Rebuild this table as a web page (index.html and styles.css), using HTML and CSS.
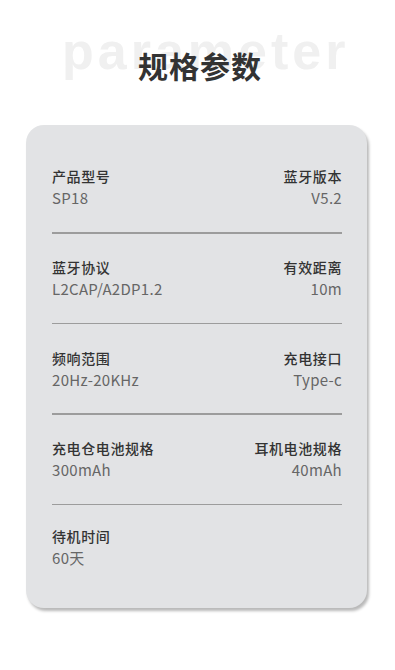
FILE: index.html
```html
<!DOCTYPE html>
<html lang="zh">
<head>
<meta charset="utf-8">
<title>规格参数</title>
<link rel="stylesheet" href="styles.css">
</head>
<body>
<header class="head">
  <div class="watermark">parameter</div>
  <h1 class="title">规格参数</h1>
</header>
<section class="card">
  <div class="row">
    <div class="cell"><div class="label">产品型号</div><div class="value">SP18</div></div>
    <div class="cell right"><div class="label">蓝牙版本</div><div class="value">V5.2</div></div>
  </div>
  <div class="sep"></div>
  <div class="row">
    <div class="cell"><div class="label">蓝牙协议</div><div class="value">L2CAP/A2DP1.2</div></div>
    <div class="cell right"><div class="label">有效距离</div><div class="value">10m</div></div>
  </div>
  <div class="sep"></div>
  <div class="row">
    <div class="cell"><div class="label">频响范围</div><div class="value">20Hz-20KHz</div></div>
    <div class="cell right"><div class="label">充电接口</div><div class="value">Type-c</div></div>
  </div>
  <div class="sep"></div>
  <div class="row">
    <div class="cell"><div class="label">充电仓电池规格</div><div class="value">300mAh</div></div>
    <div class="cell right"><div class="label">耳机电池规格</div><div class="value">40mAh</div></div>
  </div>
  <div class="sep"></div>
  <div class="row last">
    <div class="cell"><div class="label">待机时间</div><div class="value">60天</div></div>
  </div>
</section>
</body>
</html>
```
FILE: styles.css
```css
html, body {
  margin: 0;
  padding: 0;
  background: #ffffff;
}
body {
  width: 395px;
  height: 670px;
  overflow: hidden;
  font-family: "Noto Sans CJK SC", "Noto Sans", sans-serif;
}
.head {
  position: relative;
  height: 125px;
  display: flex;
  justify-content: center;
}
.watermark {
  position: absolute;
  left: 62px;
  top: 21px;
  font-family: "Liberation Sans", Arial, sans-serif;
  font-weight: 700;
  font-size: 52px;
  letter-spacing: 4px;
  line-height: 60px;
  color: #f0f0f0;
}
.title {
  position: relative;
  margin: 43px 0 0 5px;
  font-size: 30px;
  line-height: 44px;
  font-weight: 700;
  letter-spacing: 1px;
  color: #333333;
  height: 44px;
}
.card {
  margin: 0 28px 0 26px;
  height: 483px;
  box-sizing: border-box;
  background: #e2e3e5;
  border-radius: 18px;
  box-shadow: 2px 3px 3px rgba(0, 0, 0, 0.28);
  padding: 40px 25px 0 26px;
}
.row {
  display: flex;
  justify-content: space-between;
  padding-bottom: 23px;
}
.sep + .row {
  padding-top: 22.5px;
  padding-bottom: 22.5px;
}
.sep + .row.last {
  padding-top: 20px;
}
.sep {
  height: 1.5px;
  background: #9c9c9c;
}
.cell.right {
  text-align: right;
}
.label {
  font-size: 14px;
  letter-spacing: 0.6px;
  line-height: 22px;
  font-weight: 500;
  color: #333333;
}
.value {
  font-size: 15px;
  line-height: 22px;
  color: #666666;
  letter-spacing: 0.3px;
}
```
